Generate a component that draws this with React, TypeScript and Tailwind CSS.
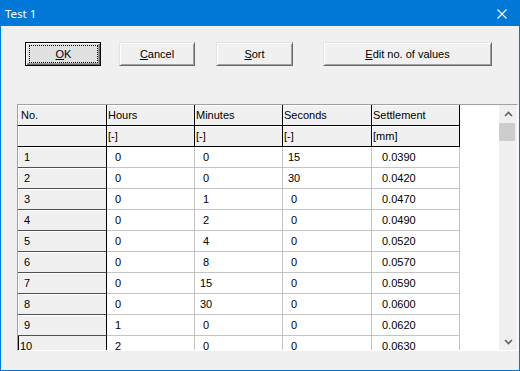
import React from "react";

const font = { fontFamily: '"Liberation Sans", Arial, sans-serif' };

const rows = [
  ["1", "0", "0", "15", "0.0390"],
  ["2", "0", "0", "30", "0.0420"],
  ["3", "0", "1", "0", "0.0470"],
  ["4", "0", "2", "0", "0.0490"],
  ["5", "0", "4", "0", "0.0520"],
  ["6", "0", "8", "0", "0.0570"],
  ["7", "0", "15", "0", "0.0590"],
  ["8", "0", "30", "0", "0.0600"],
  ["9", "1", "0", "0", "0.0620"],
  ["10", "2", "0", "0", "0.0630"],
];

const widths = ["w-[89px]", "w-[88px]", "w-[88px]", "w-[89px]", "w-[88px]"];

function Btn({ label, under, w, ml, isDefault }: { label: string; under: string; w: string; ml: string; isDefault?: boolean }) {
  const rest = label.slice(1);
  const text = (
    <span>
      <u className="underline-offset-[1px]">{under}</u>
      {rest}
    </span>
  );
  if (isDefault) {
    return (
      <div className={`${w} ${ml} h-[24px] flex border border-black bg-[#e1e1e1] shadow-[inset_1px_1px_0_#fff,inset_-1px_-1px_0_#696969,inset_-2px_-2px_0_#a0a0a0]`}>
        <div className="flex-1 m-[2px] ml-[3px] mr-[2px] border border-dotted border-black flex items-center justify-center">{text}</div>
      </div>
    );
  }
  return (
    <div className={`${w} ${ml} h-[24px] flex items-center justify-center border border-t-[#e3e3e3] border-l-[#e3e3e3] border-r-[#696969] border-b-[#696969] bg-[#f0f0f0] shadow-[inset_1px_1px_0_#fff,inset_-1px_-1px_0_#a0a0a0]`}>
      {text}
    </div>
  );
}

function HeadCell({ i, text }: { i: number; text: string }) {
  return (
    <div className={`${widths[i]} h-[21px] shrink-0 bg-[#f0f0f0] border-r border-b border-black shadow-[inset_1px_1px_0_#fff] leading-[20px] whitespace-nowrap ${i === 0 ? "pl-[3px]" : "pl-[1px]"}`}>
      {text}
    </div>
  );
}

function pad(v: string, i: number) {
  if (i === 4) return "pl-[10px]";
  return v.length === 1 ? "pl-[8px]" : "pl-[5px]";
}

export default function App() {
  return (
    <div className="w-[520px] h-[371px] flex flex-col border border-[#0078d7] bg-[#f0f0f0] text-[11px] text-black overflow-hidden" style={font}>
      {/* title bar */}
      <div className="h-[25px] shrink-0 bg-[#0078d7] flex items-center justify-between pl-[4px] pr-[12px]">
        <span className="text-white text-[11.5px]" style={{ fontFamily: '"Noto Sans", "Open Sans", sans-serif' }}>Test 1</span>
        <svg width="10" height="10" viewBox="0 0 10 10" className="mt-[1px]">
          <path d="M0.5 0.5 L9.5 9.5 M9.5 0.5 L0.5 9.5" stroke="#fff" strokeWidth="1.1" />
        </svg>
      </div>

      {/* buttons */}
      <div className="flex mt-[16px]">
        <Btn label="OK" under="O" w="w-[76px]" ml="ml-[24px]" isDefault />
        <Btn label="Cancel" under="C" w="w-[76px]" ml="ml-[18px]" />
        <Btn label="Sort" under="S" w="w-[77px]" ml="ml-[21px]" />
        <Btn label="Edit no. of values" under="E" w="w-[169px]" ml="ml-[30px]" />
      </div>

      {/* grid */}
      <div className="ml-[16px] mt-[38px] w-[501px] h-[247px] flex border border-t-[#a0a0a0] border-l-[#a0a0a0] border-r-white border-b-white overflow-hidden">
        <div className="flex-1 flex flex-col bg-white overflow-hidden">
          <div className="flex shrink-0">
            {["No.", "Hours", "Minutes", "Seconds", "Settlement"].map((t, i) => (
              <HeadCell key={t} i={i} text={t} />
            ))}
            <div className="flex-1" />
          </div>
          <div className="flex shrink-0">
            {["", "[-]", "[-]", "[-]", "[mm]"].map((t, i) => (
              <HeadCell key={i} i={i} text={t} />
            ))}
            <div className="flex-1" />
          </div>
          {rows.map((r, ri) => (
            <div key={ri} className="flex shrink-0">
              <div
                className={`${widths[0]} h-[21px] shrink-0 bg-[#f0f0f0] border-r border-black border-b border-b-[#505050] leading-[20px] whitespace-nowrap ${
                  r[0].length === 1 ? "pl-[6px] shadow-[inset_1px_1px_0_#fff]" : "pl-[2px] shadow-[inset_1px_0_0_#000]"
                }`}
              >
                {r[0]}
              </div>
              {r.slice(1).map((v, ci) => (
                <div key={ci} className={`${widths[ci + 1]} h-[21px] shrink-0 border-r border-b border-[#c4c4c4] leading-[20px] whitespace-nowrap ${pad(v, ci + 1)}`}>
                  {v}
                </div>
              ))}
              <div className="flex-1" />
            </div>
          ))}
        </div>

        {/* scrollbar */}
        <div className="w-[18px] shrink-0 flex flex-col bg-[#f0f0f0]">
          <div className="h-[18px] flex items-center justify-center">
            <svg width="9" height="6" viewBox="0 0 9 6">
              <path d="M1 5 L4.5 1.5 L8 5" stroke="#606060" strokeWidth="1.6" fill="none" />
            </svg>
          </div>
          <div className="h-[18px] w-[16px] bg-[#cdcdcd]" />
          <div className="flex-1" />
          <div className="h-[17px] flex items-center justify-center">
            <svg width="9" height="6" viewBox="0 0 9 6">
              <path d="M1 1 L4.5 4.5 L8 1" stroke="#606060" strokeWidth="1.6" fill="none" />
            </svg>
          </div>
        </div>
      </div>
    </div>
  );
}
